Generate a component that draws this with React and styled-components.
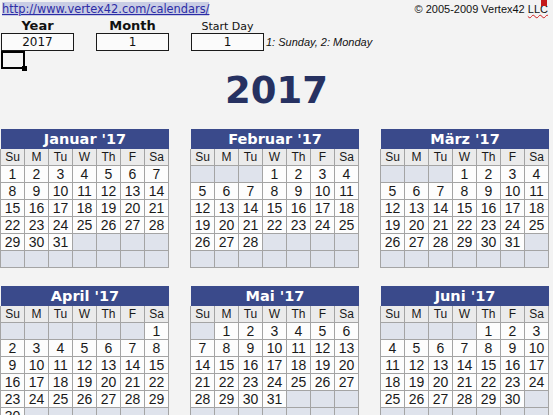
import React from 'react';
import styled, { createGlobalStyle } from 'styled-components';

const GlobalStyle = createGlobalStyle`
  body {
    margin: 0;
    background: #f3f3f3;
    overflow: hidden;
  }
`;

const Page = styled.div`
  position: relative;
  width: 553px;
  height: 415px;
  overflow: hidden;
  background: #f3f3f3;
`;

const TopBar = styled.div`
  display: flex;
  justify-content: space-between;
  align-items: center;
  height: 18px;
  padding: 0 5px 0 2px;
`;

const Link = styled.a`
  font-family: 'DejaVu Sans', Verdana, sans-serif;
  font-size: 11.4px;
  line-height: 14px;
  color: #2c2ca6;
  background: #c9cde4;
  text-decoration: underline;
`;

const Copyright = styled.span`
  font-family: 'Liberation Sans', Arial, sans-serif;
  font-size: 11px;
  color: #111;
`;

const Squiggle = styled.span`
  text-decoration: underline wavy #d02020;
  text-decoration-thickness: 1px;
`;

const CommentMark = styled.div`
  position: absolute;
  top: 0;
  right: 6px;
  width: 6px;
  height: 6px;
  background: #c41a1a;
`;

const FieldRow = styled.div`
  display: flex;
  align-items: flex-end;
  gap: 22px;
  margin-left: 1px;
`;

const Field = styled.div`
  display: flex;
  flex-direction: column;
  width: 73px;
`;

const Label = styled.div`
  height: 15px;
  text-align: center;
  font-family: 'DejaVu Sans', Verdana, sans-serif;
  font-size: ${(p) => (p.$plain ? '11px' : '13px')};
  font-weight: ${(p) => (p.$plain ? 400 : 700)};
  line-height: ${(p) => (p.$plain ? '18px' : '15px')};
  color: #111;
`;

const ValueBox = styled.div`
  box-sizing: border-box;
  height: 18px;
  border: 1px solid #1a1a1a;
  background: #fbfbfb;
  text-align: center;
  font-family: 'DejaVu Sans', Verdana, sans-serif;
  font-size: 12px;
  line-height: 16px;
  color: #111;
`;

const Note = styled.div`
  margin-left: -20px;
  font-family: 'Liberation Sans', Arial, sans-serif;
  font-style: italic;
  font-size: 11px;
  line-height: 18px;
  color: #111;
`;

const ActiveCell = styled.div`
  position: relative;
  box-sizing: border-box;
  width: 24px;
  height: 18px;
  margin-left: 1px;
  border: 2px solid #000;

  &::after {
    content: '';
    position: absolute;
    right: -4px;
    bottom: -4px;
    width: 5px;
    height: 5px;
    background: #000;
  }
`;

const Title = styled.div`
  height: 60px;
  text-align: center;
  font-family: 'DejaVu Sans', Verdana, sans-serif;
  font-weight: 700;
  font-size: 37px;
  line-height: 43px;
  color: #263161;
`;

const Months = styled.div`
  display: grid;
  grid-template-columns: repeat(3, 168px);
  column-gap: 22px;
  row-gap: 18px;
  margin-left: 1px;
`;

const Calendar = styled.div`
  width: 168px;
`;

const MonthHeader = styled.div`
  height: 20px;
  background: #3a4a8b;
  color: #fff;
  text-align: center;
  font-family: 'DejaVu Sans', Verdana, sans-serif;
  font-weight: 700;
  font-size: 14.5px;
  line-height: 20px;
`;

const DayGrid = styled.div`
  display: grid;
  grid-template-columns: repeat(7, 24px);
  grid-auto-rows: 17px;
  border-left: 1px solid #a4a4a4;
  margin-left: -1px;
`;

const Cell = styled.div`
  box-sizing: border-box;
  border-right: 1px solid #a4a4a4;
  border-bottom: 1px solid #a4a4a4;
  background: ${(p) => (p.$head ? '#ebebeb' : p.$empty ? '#dfe3ec' : '#fdfdfd')};
  text-align: center;
  font-family: 'Liberation Sans', Arial, sans-serif;
  font-size: ${(p) => (p.$head ? '12px' : '14px')};
  line-height: 16px;
  color: #1a1a1a;
`;

const dayNames = ['Su', 'M', 'Tu', 'W', 'Th', 'F', 'Sa'];
const monthNames = ['Januar', 'Februar', 'März', 'April', 'Mai', 'Juni'];

function buildDays(year, month) {
  const first = new Date(year, month, 1).getDay();
  const count = new Date(year, month + 1, 0).getDate();
  const cells = [];
  for (let i = 0; i < 42; i++) {
    const d = i - first + 1;
    cells.push(d >= 1 && d <= count ? d : null);
  }
  return cells;
}

function MonthCalendar({ year, month }) {
  const days = buildDays(year, month);
  return (
    <Calendar>
      <MonthHeader>
        {monthNames[month]} '{String(year).slice(2)}
      </MonthHeader>
      <DayGrid>
        {dayNames.map((n) => (
          <Cell key={n} $head>
            {n}
          </Cell>
        ))}
        {days.map((d, i) => (
          <Cell key={i} $empty={d === null}>
            {d}
          </Cell>
        ))}
      </DayGrid>
    </Calendar>
  );
}

export default function App() {
  const year = 2017;
  return (
    <Page>
      <GlobalStyle />
      <CommentMark />
      <TopBar>
        <Link href="#">http://www.vertex42.com/calendars/</Link>
        <Copyright>
          © 2005-2009 Vertex42 <Squiggle>LLC</Squiggle>
        </Copyright>
      </TopBar>
      <FieldRow>
        <Field>
          <Label>Year</Label>
          <ValueBox>{year}</ValueBox>
        </Field>
        <Field>
          <Label>Month</Label>
          <ValueBox>1</ValueBox>
        </Field>
        <Field>
          <Label $plain>Start Day</Label>
          <ValueBox>1</ValueBox>
        </Field>
        <Note>1: Sunday, 2: Monday</Note>
      </FieldRow>
      <ActiveCell />
      <Title>{year}</Title>
      <Months>
        {monthNames.map((_, m) => (
          <MonthCalendar key={m} year={year} month={m} />
        ))}
      </Months>
    </Page>
  );
}
